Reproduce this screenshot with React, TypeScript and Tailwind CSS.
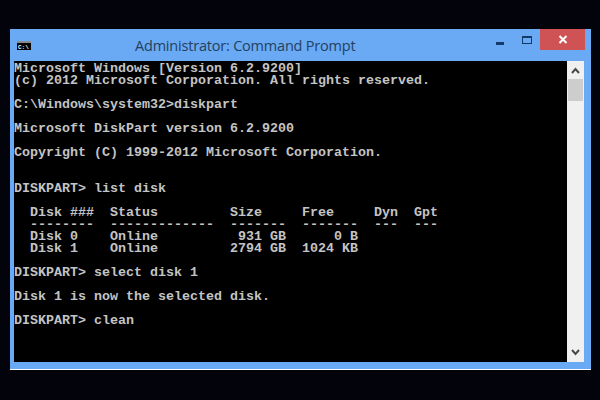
const lines = [
  "Microsoft Windows [Version 6.2.9200]",
  "(c) 2012 Microsoft Corporation. All rights reserved.",
  "",
  "C:\\Windows\\system32>diskpart",
  "",
  "Microsoft DiskPart version 6.2.9200",
  "",
  "Copyright (C) 1999-2012 Microsoft Corporation.",
  "",
  "",
  "DISKPART> list disk",
  "",
  "  Disk ###  Status         Size     Free     Dyn  Gpt",
  "  --------  -------------  -------  -------  ---  ---",
  "  Disk 0    Online          931 GB      0 B",
  "  Disk 1    Online         2794 GB  1024 KB",
  "",
  "DISKPART> select disk 1",
  "",
  "Disk 1 is now the selected disk.",
  "",
  "DISKPART> clean",
].join("\n");

export default function App() {
  return (
    <div className="w-[600px] h-[400px] bg-[#03030b] pt-[29px] pl-[10px] overflow-hidden">
      <div className="w-[581px] h-[341px] bg-[#6aa9f4] border-b-[1.5px] border-white flex flex-col">
        <div className="h-[32px] flex items-start shrink-0">
          <svg width="14" height="9" viewBox="0 0 14 9" className="ml-[7px] mt-[12px] shrink-0">
            <rect width="14" height="9" fill="#000" />
            <rect y="0" width="14" height="2" fill="#8a8a8a" />
            <text x="1" y="8" fontSize="6" fontWeight="700" fill="#fff" fontFamily="Liberation Mono, monospace">C:\</text>
          </svg>
          <span className="ml-[104px] mt-[6px] text-[14.5px] leading-[22px] text-[#23415f] font-['Open_Sans',sans-serif] tracking-[-0.2px] whitespace-nowrap">
            Administrator: Command Prompt
          </span>
          <div className="ml-auto flex items-start mr-[6px]">
            <div className="w-[8px] h-[3px] bg-[#123a6b] mt-[13px]" />
            <div className="w-[10px] h-[8px] border-[1.5px] border-t-[2.5px] border-[#123a6b] ml-[18px] mt-[7px]" />
            <div className="w-[45px] h-[21px] bg-[#cf5355] ml-[8px] flex items-center justify-center">
              <svg width="10" height="9" viewBox="0 0 10 9">
                <path d="M1.5 1 L8.5 8 M8.5 1 L1.5 8" stroke="#fff" strokeWidth="2" />
              </svg>
            </div>
          </div>
        </div>
        <div className="h-[301px] ml-[4px] mr-[7px] flex bg-black">
          <pre className="flex-1 m-0 pt-[2px] text-[13.33px] leading-[12px] font-bold text-[#c4c4c4] font-['Liberation_Mono',monospace]">
            {lines}
          </pre>
          <div className="w-[17px] bg-[#f0f0f0] flex flex-col items-center shrink-0">
            <svg width="17" height="18" viewBox="0 0 17 18" className="shrink-0">
              <path d="M5 12 L8.5 8 L12 12" fill="none" stroke="#4a4a4a" strokeWidth="2" />
            </svg>
            <div className="w-[15px] h-[22px] bg-[#cdcdcd]" />
            <svg width="17" height="17" viewBox="0 0 17 17" className="mt-auto shrink-0">
              <path d="M5 5 L8.5 9 L12 5" fill="none" stroke="#4a4a4a" strokeWidth="2" />
            </svg>
          </div>
        </div>
      </div>
    </div>
  );
}
